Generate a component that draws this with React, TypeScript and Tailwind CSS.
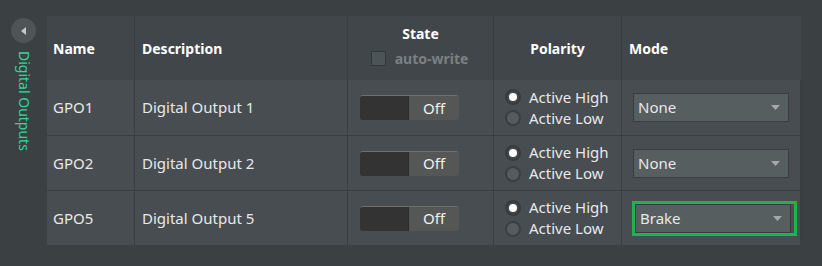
import { useState } from "react";

type Row = { name: string; desc: string; mode: string; focused?: boolean };

const rows: Row[] = [
  { name: "GPO1", desc: "Digital Output 1", mode: "None" },
  { name: "GPO2", desc: "Digital Output 2", mode: "None" },
  { name: "GPO5", desc: "Digital Output 5", mode: "Brake", focused: true },
];

const font = { fontFamily: '"Segoe UI", "Noto Sans", "Open Sans", sans-serif' };

function Toggle() {
  return (
    <div className="flex h-[25px] w-[99px] rounded-[3px] border-t border-[#6b7073] overflow-hidden">
      <div className="w-[49px] bg-[#333333] border-r border-[#2a2a2a]" />
      <div className="flex-1 bg-[#555757] flex items-center justify-center text-[15px] text-[#f0f0f0]">
        Off
      </div>
    </div>
  );
}

function Radio({ checked, label }: { checked: boolean; label: string }) {
  return (
    <div className="flex items-center gap-[8px] h-[21px]">
      <span
        className={`shrink-0 w-[16px] h-[16px] rounded-full border-2 flex items-center justify-center ${
          checked ? "bg-[#41474a] border-[#363b3e]" : "bg-[#555c5e] border-[#3a3f42]"
        }`}
      >
        {checked && <span className="block shrink-0 w-[8px] h-[8px] rounded-full bg-white" />}
      </span>
      <span className="text-[15px] text-[#e8e8e8]">{label}</span>
    </div>
  );
}

function Select({ value }: { value: string }) {
  return (
    <div className="flex items-center justify-between h-[29px] w-[156px] bg-[#575e60] border border-[#393d40] pl-[4px] pr-[8px]">
      <span className="text-[15px] text-[#e8e8e8]">{value}</span>
      <svg width="9" height="5" viewBox="0 0 9 5">
        <path d="M0 0h9L4.5 5z" fill="#a4a8aa" />
      </svg>
    </div>
  );
}

export default function App() {
  const [open] = useState(true);
  return (
    <div className="w-[822px] h-[266px] bg-[#3b4043] flex pt-[16px]" style={font}>
      <div className="w-[47px] flex flex-col items-center">
        <button className="mt-[2px] w-[25px] h-[25px] rounded-full bg-[#4f5557] flex items-center justify-center">
          <svg width="6" height="8" viewBox="0 0 6 8">
            <path d="M5 0v8L0 4z" fill="#c4c8c9" />
          </svg>
        </button>
        <div className="mt-[8px] [writing-mode:vertical-rl] text-[14px] text-[#2fd89a] leading-none">
          Digital Outputs
        </div>
      </div>
      {open && (
        <div className="w-[754px] h-[229px] flex flex-col">
          <div className="grid grid-cols-[87px_213px_146px_128px_180px] h-[64px] bg-[#41464a] text-white font-bold text-[14px]">
            <div className="flex items-center pl-[6px]">Name</div>
            <div className="flex items-center pl-[7px] border-l border-[#393d40]">Description</div>
            <div className="flex flex-col items-center justify-center border-l border-[#393d40]">
              <div className="mt-[-4px]">State</div>
              <div className="flex items-center gap-[9px] mt-[4px] mr-[2px]">
                <span className="shrink-0 block w-[15px] h-[15px] bg-[#4d5457] border border-[#33373a]" />
                <span className="text-[#7b8082]">auto-write</span>
              </div>
            </div>
            <div className="flex items-center justify-center border-l border-[#393d40]">Polarity</div>
            <div className="flex items-center pl-[7px] border-l border-[#393d40]">Mode</div>
          </div>
          {rows.map((r, i) => (
            <div
              key={r.name}
              className={`grid grid-cols-[87px_213px_146px_128px_180px] h-[55px] bg-[#484d51] text-[15px] text-[#e8e8e8] ${i > 0 ? "border-t border-[#3a3e41]" : ""}`}
            >
              <div className="flex items-center pl-[6px]">{r.name}</div>
              <div className="flex items-center pl-[7px] border-l border-[#3a3e41]">{r.desc}</div>
              <div className="flex items-center pl-[12px] border-l border-[#3a3e41]">
                <Toggle />
              </div>
              <div className="flex flex-col justify-center pl-[11px] border-l border-[#3a3e41]">
                <Radio checked label="Active High" />
                <Radio checked={false} label="Active Low" />
              </div>
              <div className="flex items-center pl-[11px] border-l border-r border-[#3a3e41]">
                {r.focused ? (
                  <div className="ml-[-1px] border-[3px] border-[#20b24b] pr-[3px]">
                    <Select value={r.mode} />
                  </div>
                ) : (
                  <Select value={r.mode} />
                )}
              </div>
            </div>
          ))}
        </div>
      )}
    </div>
  );
}
